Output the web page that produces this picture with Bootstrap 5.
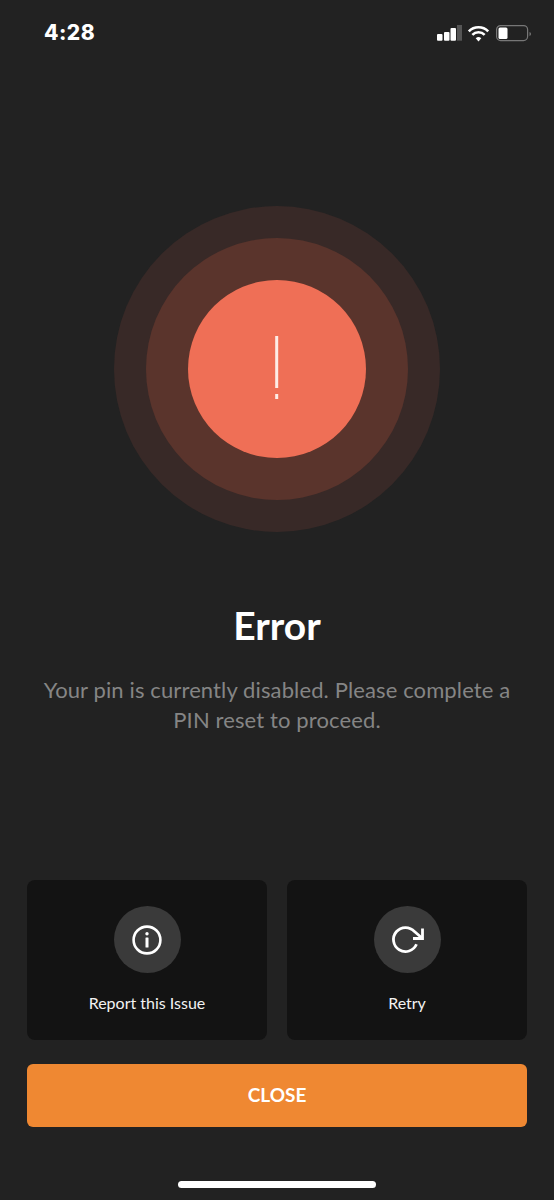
<!DOCTYPE html>
<html lang="en">

<head>
  <meta charset="UTF-8">
  <meta name="viewport" content="width=device-width, initial-scale=1.0">
  <title>Error</title>
  <link href="https://cdn.jsdelivr.net/npm/bootstrap@5.3.0/dist/css/bootstrap.min.css" rel="stylesheet">
  <style>
    body { background: #222222; font-family: "Lato", "Liberation Sans", sans-serif; }
    .screen { height: 1200px; width: 554px; overflow: hidden; }
    .status-row { height: 66px; padding: 0 21px 0 44px; }
    .status-time { font-family: "Inter", sans-serif; font-size: 21px; font-weight: 800; color: #fff; letter-spacing: .5px; }
    .pulse-wrap { margin-top: 140px; }
    .ring-outer { width: 326px; height: 326px; background: #38292700; background-color: #382927; }
    .ring-mid { width: 262px; height: 262px; background: #5a342c; }
    .ring-core { width: 178px; height: 178px; background: #ef6f56; }
    .bang { margin-bottom: 3px; }
    .err-title { margin-top: 71px; font-size: 39px; line-height: 44px; font-weight: 700; color: #fff; }
    .err-text { margin-top: 28px; font-size: 22px; line-height: 30px; letter-spacing: .12px; color: #858585; }
    .actions { margin-top: 145px; padding: 0 27px; gap: 20px; }
    .action-tile { width: 240px; height: 160px; background: #131313; border-radius: 8px; padding-top: 26px; }
    .action-dot { width: 67px; height: 67px; background: #3a3a3a; }
    .action-label { margin-top: 19px; font-size: 16px; line-height: 22px; color: #f2f2f2; }
    .close-wrap { padding: 24px 27px 0; }
    .close-btn { height: 63px; background: #ef8832; border: 0; border-radius: 6px; color: #fff; font-size: 19px; font-weight: 700; }
    .close-btn:hover { background: #ef8832; color: #fff; }
    .home-bar { width: 198px; height: 7px; margin-top: 54px; background: #fff; border-radius: 4px; }
  </style>
</head>

<body>
  <div class="screen d-flex flex-column">

    <!-- Status bar -->
    <div class="status-row d-flex justify-content-between align-items-center">
      <span class="status-time">4:28</span>
      <svg width="96" height="24" viewBox="0 0 96 24">
        <rect x="0" y="13" width="5.500" height="6.700" rx="1" fill="#fff" />
        <rect x="7" y="11" width="5.500" height="8.700" rx="1" fill="#fff" />
        <rect x="13.500" y="7" width="5.500" height="12.700" rx="1" fill="#fff" />
        <rect x="20" y="4" width="5" height="15.700" fill="#555" />
        <path d="M31.800 10.300a13.700 13.700 0 0 1 19.400 0M35.350 13.850a8.700 8.700 0 0 1 12.300 0" fill="none" stroke="#fff" stroke-width="2.600" />
        <path d="M41.500 20.500L38.700 17.200A4.300 4.300 0 0 1 44.300 17.200z" fill="#fff" />
        <rect x="59.600" y="4.600" width="31" height="15" rx="4" fill="none" stroke="#777" stroke-width="1.200" />
        <rect x="61.500" y="6.500" width="9" height="11.500" rx="1.500" fill="#fff" />
        <path d="M92.500 11v4a2 2 0 0 0 1.500-2 2 2 0 0 0-1.500-2z" fill="#777" />
      </svg>
    </div>

    <!-- Pulsing error icon -->
    <div class="pulse-wrap d-flex justify-content-center">
      <div class="ring-outer rounded-circle d-flex justify-content-center align-items-center">
        <div class="ring-mid rounded-circle d-flex justify-content-center align-items-center">
          <div class="ring-core rounded-circle d-flex justify-content-center align-items-center">
            <svg class="bang" width="4" height="63" viewBox="0 0 4 63">
              <rect x="0.200" y="0" width="3" height="52" fill="#fdece6" />
              <rect x="0.200" y="58" width="3" height="5" fill="#fdece6" />
            </svg>
          </div>
        </div>
      </div>
    </div>

    <h1 class="err-title text-center mb-0">Error</h1>
    <p class="err-text text-center mb-0">Your pin is currently disabled. Please complete a<br>PIN reset to proceed.</p>

    <!-- Actions -->
    <div class="actions d-flex">
      <div class="action-tile d-flex flex-column align-items-center">
        <div class="action-dot rounded-circle d-flex justify-content-center align-items-center">
          <svg width="34" height="34" viewBox="0 0 34 34">
            <circle cx="17" cy="17" r="13.400" fill="none" stroke="#fff" stroke-width="2.600" />
            <rect x="15.500" y="14.500" width="3" height="10" rx="0.500" fill="#fff" />
            <circle cx="17" cy="10.800" r="1.700" fill="#fff" />
          </svg>
        </div>
        <div class="action-label">Report this Issue</div>
      </div>
      <div class="action-tile d-flex flex-column align-items-center">
        <div class="action-dot rounded-circle d-flex justify-content-center align-items-center">
          <svg width="34" height="34" viewBox="0 0 34 34">
            <path d="M26.500 21.300A12 12 0 1 1 24.500 8.600L32.500 15.500" fill="none" stroke="#fff" stroke-width="2.800" />
            <path d="M32.500 5.500V15.500H23" fill="none" stroke="#fff" stroke-width="2.800" />
          </svg>
        </div>
        <div class="action-label">Retry</div>
      </div>
    </div>

    <div class="close-wrap">
      <button type="button" class="btn close-btn w-100">CLOSE</button>
    </div>

    <div class="home-bar align-self-center"></div>
  </div>

  <script src="https://cdn.jsdelivr.net/npm/bootstrap@5.3.0/dist/js/bootstrap.bundle.min.js"></script>
</body>

</html>
